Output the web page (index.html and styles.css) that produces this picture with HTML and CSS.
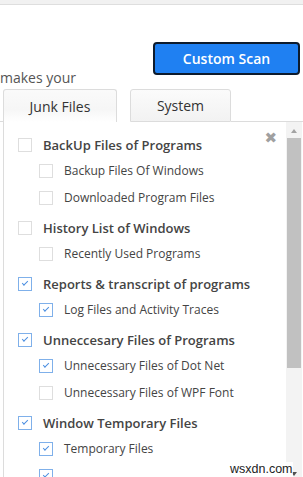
FILE: index.html
```html
<!DOCTYPE html>
<html>
<head>
<meta charset="utf-8">
<link rel="stylesheet" href="styles.css">
</head>
<body>
<div class="topbar"></div>
<div class="btn-row"><button class="scan-btn">Custom Scan</button></div>
<p class="intro">makes your</p>
<div class="tabs">
  <div class="tab active">Junk Files</div>
  <div class="tab">System</div>
  <div class="tab-fill"></div>
</div>
<div class="panel">
  <div class="list">
    <span class="close">&#10006;</span>
    <div class="group">
      <label class="item main"><span class="cb"></span>BackUp Files of Programs</label>
      <label class="item sub"><span class="cb"></span>Backup Files Of Windows</label>
      <label class="item sub"><span class="cb"></span>Downloaded Program Files</label>
    </div>
    <div class="group">
      <label class="item main"><span class="cb"></span>History List of Windows</label>
      <label class="item sub"><span class="cb"></span>Recently Used Programs</label>
    </div>
    <div class="group">
      <label class="item main"><span class="cb on"></span>Reports &amp; transcript of programs</label>
      <label class="item sub"><span class="cb on"></span>Log Files and Activity Traces</label>
    </div>
    <div class="group">
      <label class="item main"><span class="cb on"></span>Unneccesary Files of Programs</label>
      <label class="item sub"><span class="cb on"></span>Unnecessary Files of Dot Net</label>
      <label class="item sub"><span class="cb"></span>Unnecessary Files of WPF Font</label>
    </div>
    <div class="group">
      <label class="item main"><span class="cb on"></span>Window Temporary Files</label>
      <label class="item sub"><span class="cb on"></span>Temporary Files</label>
      <label class="item sub"><span class="cb on"></span></label>
    </div>
  </div>
  <div class="scrollbar">
    <div class="arrow up"></div>
    <div class="thumb"></div>
    <div class="track"></div>
    <div class="arrow down"></div>
  </div>
</div>
<div class="watermark">wsxdn.com</div>
</body>
</html>
```
FILE: styles.css
```css
html, body {
  margin: 0;
  padding: 0;
  background: #fff;
  overflow: hidden;
  height: 477px;
}
body {
  font-family: "Open Sans", "DejaVu Sans", sans-serif;
  position: relative;
}
.topbar {
  height: 4px;
  background: #f1f1f1;
  border-bottom: 1px solid #dedede;
}
.btn-row {
  display: flex;
  justify-content: flex-end;
  padding-right: 3px;
  margin-top: 37px;
}
.scan-btn {
  width: 147px;
  height: 33px;
  background: #1f80f2;
  border: 2px solid #0d1b2d;
  border-radius: 4px;
  color: #fff;
  font-family: "Open Sans", sans-serif;
  font-weight: 600;
  font-size: 14px;
  padding: 0;
}
.intro {
  margin: -6px 0 0 0;
  height: 20px;
  line-height: 18px;
  font-size: 14px;
  color: #555;
}
.tabs {
  display: flex;
  height: 33px;
}
.tabs::before {
  content: "";
  width: 3px;
  border-bottom: 1px solid #dcdcdc;
}
.tab {
  box-sizing: border-box;
  height: 33px;
  border: 1px solid #dcdcdc;
  border-radius: 3px 3px 0 0;
  background: linear-gradient(#fbfbfb, #f2f2f2);
  font-size: 14px;
  color: #333;
  display: flex;
  align-items: center;
  justify-content: center;
}
.tab.active {
  width: 114px;
  border-bottom: none;
  background: linear-gradient(#fafafa, #f6f6f6 60%, #fff);
}
.tab:not(.active) {
  width: 101px;
  margin-left: 13px;
  border-bottom: 1px solid #dcdcdc;
}
.tab-fill {
  flex: 1;
  border-bottom: 1px solid #dcdcdc;
}
.panel {
  margin-left: 3px;
  margin-right: 1px;
  border-left: 1px solid #dcdcdc;
  display: flex;
  height: 360px;
}
.list {
  flex: 1;
  position: relative;
  padding: 11px 0 0 14px;
}
.close {
  position: absolute;
  right: 9px;
  top: 8px;
  font-size: 15px;
  line-height: 16px;
  color: #a0a0a0;
  font-family: "DejaVu Sans", sans-serif;
  font-weight: bold;
}
.group {
  margin-bottom: 5px;
}
.item {
  display: flex;
  align-items: center;
  white-space: nowrap;
}
.item.main {
  height: 24px;
  font-size: 13px;
  font-weight: 600;
  color: #444;
}
.item.sub {
  height: 27px;
  padding-left: 21px;
  font-size: 12px;
  color: #444;
}
.cb {
  box-sizing: border-box;
  width: 14px;
  height: 14px;
  border: 1px solid #dedede;
  background: #fff;
  margin-right: 11px;
  flex: none;
  position: relative;
}
.cb.on {
  border-color: #7fb0ea;
}
.cb.on::after {
  content: "";
  position: absolute;
  left: 3px;
  top: 3px;
  width: 5px;
  height: 2px;
  border-left: 1.5px solid #4a8ee0;
  border-bottom: 1.5px solid #4a8ee0;
  transform: rotate(-45deg);
}
.scrollbar {
  width: 16px;
  display: flex;
  flex-direction: column;
  background: #f3f3f3;
}
.arrow {
  height: 16px;
  flex: none;
  position: relative;
}
.arrow::after {
  content: "";
  position: absolute;
  left: 5px;
  border-left: 3px solid transparent;
  border-right: 3px solid transparent;
}
.arrow.up::after {
  top: 7px;
  border-bottom: 4px solid #a3a3a3;
}
.arrow.down::after {
  top: 6px;
  border-top: 4px solid #505050;
}
.thumb {
  height: 230px;
  margin: 0 1px;
  background: #c1c1c1;
}
.track {
  flex: 1;
}
.watermark {
  position: absolute;
  left: 230px;
  top: 462px;
  font-family: "Liberation Sans", Arial, sans-serif;
  font-size: 12.5px;
  color: #222;
  background: rgba(255,255,255,0.85);
  line-height: 15px;
}
```
